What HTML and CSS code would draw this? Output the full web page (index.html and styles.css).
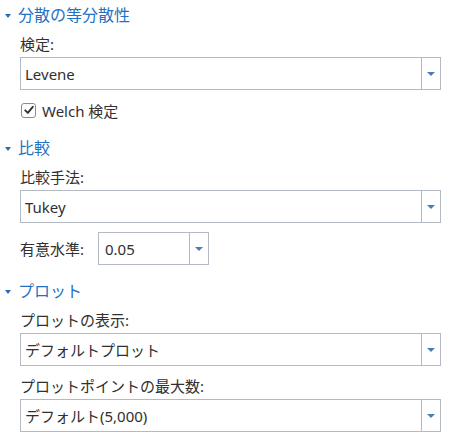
FILE: index.html
```html
<!DOCTYPE html>
<html lang="ja">
<head>
<meta charset="utf-8">
<link rel="stylesheet" href="styles.css">
</head>
<body>
<div class="panel">
  <section class="sec">
    <div class="sec-head"><span class="tri"></span><span>分散の等分散性</span></div>
    <div class="sec-body">
      <div class="label">検定:</div>
      <div class="select"><span class="val">Levene</span><span class="btn"><span class="arrow"></span></span></div>
      <label class="check">
        <span class="box"><svg width="12" height="12" viewBox="0 0 12 12"><path d="M2.2 6.3 L4.8 8.8 L9.8 2.8" fill="none" stroke="#2b2b2b" stroke-width="1.8" stroke-linecap="round" stroke-linejoin="round"/></svg></span>
        <span>Welch 検定</span>
      </label>
    </div>
  </section>
  <section class="sec sec2">
    <div class="sec-head"><span class="tri"></span><span>比較</span></div>
    <div class="sec-body">
      <div class="label">比較手法:</div>
      <div class="select"><span class="val">Tukey</span><span class="btn"><span class="arrow"></span></span></div>
      <div class="inline-row">
        <span class="label-inline">有意水準:</span>
        <div class="select small"><span class="val">0.05</span><span class="btn"><span class="arrow"></span></span></div>
      </div>
    </div>
  </section>
  <section class="sec sec3">
    <div class="sec-head"><span class="tri"></span><span>プロット</span></div>
    <div class="sec-body">
      <div class="label">プロットの表示:</div>
      <div class="select"><span class="val">デフォルトプロット</span><span class="btn"><span class="arrow"></span></span></div>
      <div class="label gap">プロットポイントの最大数:</div>
      <div class="select"><span class="val">デフォルト(5,000)</span><span class="btn"><span class="arrow"></span></span></div>
    </div>
  </section>
</div>
</body>
</html>
```
FILE: styles.css
```css
* { box-sizing: border-box; }
html, body { margin: 0; padding: 0; background: #fff; }
body {
  font-family: "Noto Sans", "Noto Sans CJK JP", sans-serif;
  font-size: 15px;
  color: #303030;
}
.panel { padding: 5px 14px 0 0; width: 455px; }
.sec-head {
  display: flex;
  align-items: center;
  height: 20px;
  line-height: 20px;
  color: #2272c3;
  font-size: 16px;
  padding-left: 5px;
}
.tri {
  width: 0; height: 0;
  border-left: 3.5px solid transparent;
  border-right: 3.5px solid transparent;
  border-top: 4px solid #2a6fb5;
  margin-right: 7px;
  margin-top: 1px;
}
.sec2 { margin-top: 18px; }
.sec3 { margin-top: 16px; }
.sec-body { padding-left: 20px; }
.label {
  line-height: 20px;
  margin-top: 9px;
  margin-bottom: 3px;
}
.label.gap { margin-top: 10px; }
.select {
  display: flex;
  height: 33px;
  border: 1px solid #b4bac4;
  background: #fff;
  width: 421px;
}
.select .val {
  flex: 1;
  display: flex;
  align-items: center;
  padding-left: 4px;
  white-space: nowrap;
}
.select .btn {
  width: 19px;
  border-left: 1px solid #b4bac4;
  display: flex;
  align-items: center;
  justify-content: center;
}
.arrow {
  width: 0; height: 0;
  border-left: 4px solid transparent;
  border-right: 4px solid transparent;
  border-top: 4px solid #4a7db4;
}
.check {
  display: flex;
  align-items: center;
  height: 20px;
  margin-top: 10px;
}
.box {
  width: 15px; height: 15px;
  border: 1px solid #8c8c8c;
  border-radius: 3px;
  display: flex;
  align-items: center;
  justify-content: center;
  margin-left: 1px;
  margin-right: 6px;
}
.inline-row {
  display: flex;
  align-items: center;
  margin-top: 9px;
}
.label-inline { width: 78px; }
.select.small { width: 111px; height: 33px; }
.select.small .val { padding-left: 6px; }
```
